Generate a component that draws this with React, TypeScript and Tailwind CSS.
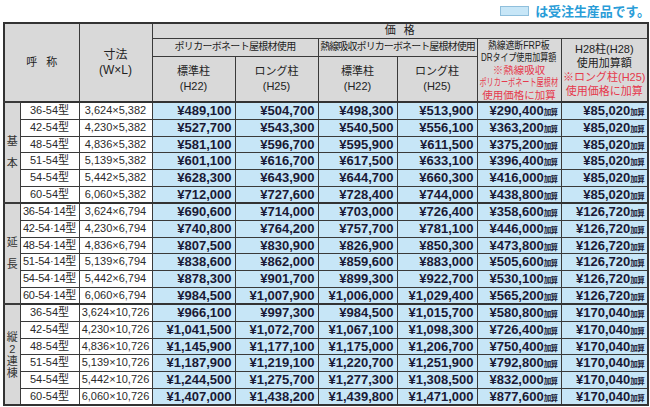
type Row = [string, string, string, string, string, string, string, string];

const groups: { label: string[]; tight?: boolean; rows: Row[] }[] = [
  {
    label: ['基', '本'],
    rows: [
      ['36-54型', '3,624×5,382', '¥489,100', '¥504,700', '¥498,300', '¥513,900', '¥290,400', '¥85,020'],
      ['42-54型', '4,230×5,382', '¥527,700', '¥543,300', '¥540,500', '¥556,100', '¥363,200', '¥85,020'],
      ['48-54型', '4,836×5,382', '¥581,100', '¥596,700', '¥595,900', '¥611,500', '¥375,200', '¥85,020'],
      ['51-54型', '5,139×5,382', '¥601,100', '¥616,700', '¥617,500', '¥633,100', '¥396,400', '¥85,020'],
      ['54-54型', '5,442×5,382', '¥628,300', '¥643,900', '¥644,700', '¥660,300', '¥416,000', '¥85,020'],
      ['60-54型', '6,060×5,382', '¥712,000', '¥727,600', '¥728,400', '¥744,000', '¥438,800', '¥85,020'],
    ],
  },
  {
    label: ['延', '長'],
    rows: [
      ['36-54·14型', '3,624×6,794', '¥690,600', '¥714,000', '¥703,000', '¥726,400', '¥358,600', '¥126,720'],
      ['42-54·14型', '4,230×6,794', '¥740,800', '¥764,200', '¥757,700', '¥781,100', '¥446,000', '¥126,720'],
      ['48-54·14型', '4,836×6,794', '¥807,500', '¥830,900', '¥826,900', '¥850,300', '¥473,800', '¥126,720'],
      ['51-54·14型', '5,139×6,794', '¥838,600', '¥862,000', '¥859,600', '¥883,000', '¥505,600', '¥126,720'],
      ['54-54·14型', '5,442×6,794', '¥878,300', '¥901,700', '¥899,300', '¥922,700', '¥530,100', '¥126,720'],
      ['60-54·14型', '6,060×6,794', '¥984,500', '¥1,007,900', '¥1,006,000', '¥1,029,400', '¥565,200', '¥126,720'],
    ],
  },
  {
    label: ['縦', '2', '連', '棟'],
    tight: true,
    rows: [
      ['36-54型', '3,624×10,726', '¥966,100', '¥997,300', '¥984,500', '¥1,015,700', '¥580,800', '¥170,040'],
      ['42-54型', '4,230×10,726', '¥1,041,500', '¥1,072,700', '¥1,067,100', '¥1,098,300', '¥726,400', '¥170,040'],
      ['48-54型', '4,836×10,726', '¥1,145,900', '¥1,177,100', '¥1,175,000', '¥1,206,700', '¥750,400', '¥170,040'],
      ['51-54型', '5,139×10,726', '¥1,187,900', '¥1,219,100', '¥1,220,700', '¥1,251,900', '¥792,800', '¥170,040'],
      ['54-54型', '5,442×10,726', '¥1,244,500', '¥1,275,700', '¥1,277,300', '¥1,308,500', '¥832,000', '¥170,040'],
      ['60-54型', '6,060×10,726', '¥1,407,000', '¥1,438,200', '¥1,439,800', '¥1,471,000', '¥877,600', '¥170,040'],
    ],
  },
];

const rowH = ['h-[17px]', 'h-[17px]', 'h-[16px]', 'h-[17px]', 'h-[17px]', 'h-[17px]'];

const cell = 'border border-[#3a3a3a] p-0';
const head = `${cell} bg-[#d9d9d9] text-center align-middle overflow-hidden`;
const price = `${cell} bg-[#c7e6f7] text-right pr-[3px] text-[13px] font-bold text-[#1a1a36] overflow-hidden`;
const red = 'text-[#e63a4d]';

const Squeeze = ({ text, className }: { text: string; className: string }) => (
  <div className="flex justify-center whitespace-nowrap">
    <span className={`inline-block ${className}`}>{text}</span>
  </div>
);

const App = () => {
  return (
    <div className="w-[650px] h-[407px] overflow-hidden bg-white font-['Liberation_Sans','Noto_Sans_CJK_JP',sans-serif] text-[#222] leading-none">
      <div className="h-[22px] flex items-center justify-end pr-0 gap-[6px]">
        <div className="w-[29px] h-[10px] bg-[#c7e6f7] border border-[#8fbfdc]" />
        <span className="text-[13px] font-bold text-[#2a9dd8] tracking-[-0.1px]">は受注生産品です。</span>
      </div>

      <table className="ml-[3px] w-[644px] table-fixed border-collapse border-2 border-[#333]">
        <colgroup>
          <col className="w-[16px]" />
          <col className="w-[59px]" />
          <col className="w-[73px]" />
          <col className="w-[83px]" />
          <col className="w-[83px]" />
          <col className="w-[79px]" />
          <col className="w-[80px]" />
          <col className="w-[84px]" />
          <col className="w-[87px]" />
        </colgroup>
        <thead>
          <tr className="h-[15px]">
            <th rowSpan={3} colSpan={2} className={`${head} font-normal text-[11px] tracking-[9px] pl-[9px]`}>
              呼称
            </th>
            <th rowSpan={3} className={`${head} font-normal text-[12px] leading-[15px]`}>
              寸法
              <br />
              (W×L)
            </th>
            <th colSpan={6} className={`${head} font-normal text-[11px] tracking-[8px] pl-[8px]`}>
              価格
            </th>
          </tr>
          <tr className="h-[18px]">
            <th colSpan={2} className={`${head} font-normal text-[10px] tracking-[-0.7px]`}>
              ポリカーボネート屋根材使用
            </th>
            <th colSpan={2} className={`${head} font-normal text-[10px] tracking-[-0.9px]`}>
              熱線吸収ポリカーボネート屋根材使用
            </th>
            <th rowSpan={2} className={`${head} font-normal text-[10.5px] leading-[12.5px]`}>
              <Squeeze text="熱線遮断FRP板" className="scale-x-[0.84]" />
              <Squeeze text="DRタイプ使用加算額" className="scale-x-[0.76]" />
              <div className={red}>※熱線吸収</div>
              <Squeeze text="ポリカーボネート屋根材" className={`scale-x-[0.68] ${red}`} />
              <div className={red}>使用価格に加算</div>
            </th>
            <th rowSpan={2} className={`${head} font-normal text-[11px] leading-[14px]`}>
              <div>H28柱(H28)</div>
              <div>使用加算額</div>
              <div className={red}>※ロング柱(H25)</div>
              <div className={red}>使用価格に加算</div>
            </th>
          </tr>
          <tr className="h-[45px]">
            {['標準柱', 'ロング柱', '標準柱', 'ロング柱'].map((t, i) => (
              <th key={i} className={`${head} font-normal text-[11px] leading-[15px]`}>
                {t}
                <br />
                ({i % 2 === 0 ? 'H22' : 'H25'})
              </th>
            ))}
          </tr>
        </thead>
        <tbody>
          {groups.map((g, gi) =>
            g.rows.map((r, ri) => (
              <tr key={`${gi}-${ri}`} className={`${rowH[ri]} ${ri === 0 ? 'border-t-2 border-[#333]' : ''}`}>
                {ri === 0 && (
                  <td rowSpan={6} className={`${cell} border-t-2 bg-[#d9d9d9] text-center align-middle`}>
                    <div className={`flex flex-col items-center text-[11px] text-[#333] ${g.tight ? 'leading-[12px]' : 'gap-[11px]'}`}>
                      {g.label.map((c, ci) => (
                        <span key={ci}>{c}</span>
                      ))}
                    </div>
                  </td>
                )}
                <td className={`${cell} bg-white text-center text-[11px] text-[#2b2b2b] whitespace-nowrap overflow-hidden ${r[0].includes('·') ? 'tracking-[-0.2px]' : ''}`}>
                  {r[0]}
                </td>
                <td className={`${cell} bg-white text-center text-[11px] text-[#2b2b2b] whitespace-nowrap overflow-hidden`}>{r[1]}</td>
                <td className={price}>{r[2]}</td>
                <td className={price}>{r[3]}</td>
                <td className={price}>{r[4]}</td>
                <td className={price}>{r[5]}</td>
                <td className={`${price} whitespace-nowrap`}>
                  {r[6]}
                  <span className="text-[7.5px] tracking-[-0.6px]">加算</span>
                </td>
                <td className={`${price} whitespace-nowrap`}>
                  {r[7]}
                  <span className="text-[7.5px] tracking-[-0.6px]">加算</span>
                </td>
              </tr>
            ))
          )}
        </tbody>
      </table>
    </div>
  );
};

export default App;
